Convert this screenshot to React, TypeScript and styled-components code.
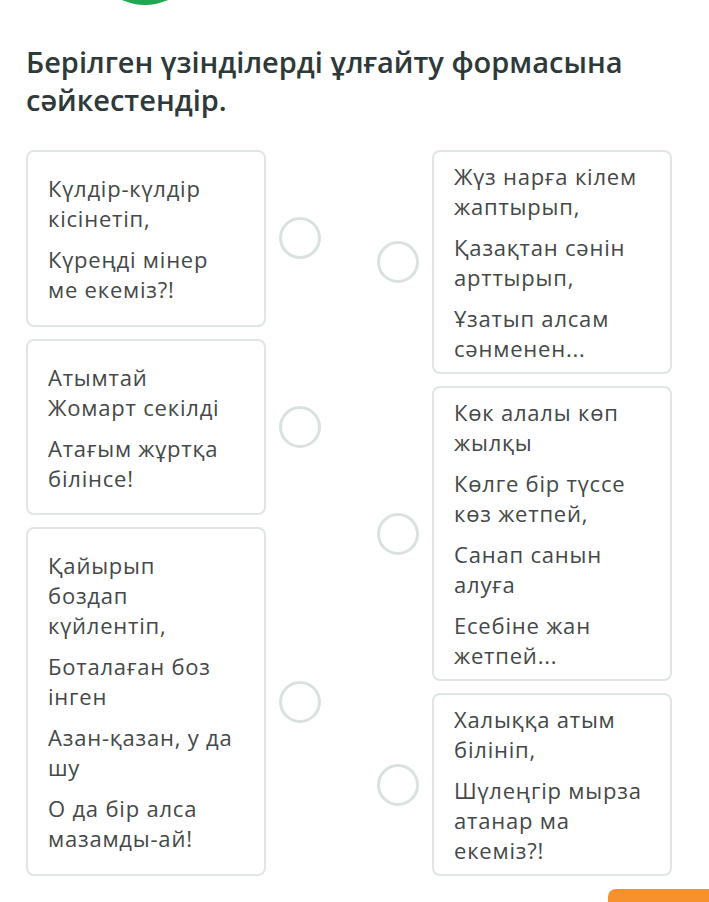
import styled, { createGlobalStyle } from "styled-components";

const GlobalStyle = createGlobalStyle`
  html, body {
    margin: 0;
    padding: 0;
    background: #ffffff;
    overflow: hidden;
  }
  body {
    font-family: "Open Sans", "Noto Sans", sans-serif;
  }
`;

type Card = { lines: string[] };

const leftCards: Card[] = [
  { lines: ["Күлдір-күлдір кісінетіп,", "Күреңді мінер ме екеміз?!"] },
  { lines: ["Атымтай Жомарт секілді", "Атағым жұртқа білінсе!"] },
  {
    lines: [
      "Қайырып боздап күйлентіп,",
      "Боталаған боз інген",
      "Азан-қазан, у да шу",
      "О да бір алса мазамды-ай!",
    ],
  },
];

const rightCards: Card[] = [
  { lines: ["Жүз нарға кілем жаптырып,", "Қазақтан сәнін арттырып,", "Ұзатып алсам сәнменен..."] },
  {
    lines: [
      "Көк алалы көп жылқы",
      "Көлге бір түссе көз жетпей,",
      "Санап санын алуға",
      "Есебіне жан жетпей...",
    ],
  },
  { lines: ["Халыққа атым білініп,", "Шүлеңгір мырза атанар ма екеміз?!"] },
];

const Page = styled.div`
  width: 709px;
  height: 902px;
  padding: 0 37px 0 26px;
  box-sizing: border-box;
  overflow: hidden;
`;

const Header = styled.div`
  display: flex;
  padding-left: 64px;
`;

const Progress = styled.div`
  width: 110px;
  height: 110px;
  margin-top: -105px;
  border-radius: 50%;
  background: #1fa84f;
`;

const Title = styled.h1`
  margin: 38px 0 31px;
  font-family: "Open Sans", "Noto Sans", sans-serif;
  font-size: 29px;
  line-height: 38px;
  font-weight: 600;
  color: #2e3939;
`;

const Board = styled.div`
  display: grid;
  grid-template-columns: 295px 295px;
  column-gap: 56px;
  align-items: stretch;
`;

const Column = styled.div`
  display: flex;
  flex-direction: column;
  gap: 12px;
`;

const Row = styled.div<{ $side: "left" | "right" }>`
  flex: 1 1 auto;
  display: flex;
  flex-direction: ${(p) => (p.$side === "left" ? "row" : "row-reverse")};
  align-items: stretch;
  gap: 13px;
`;

const CardBox = styled.div`
  width: 240px;
  box-sizing: border-box;
  border: 2px solid #e0e6e5;
  border-radius: 8px;
  background: #ffffff;
  padding: 9px 24px 9px 20px;
  display: flex;
  flex-direction: column;
  justify-content: center;
  gap: 11px;
`;

const Line = styled.p`
  margin: 0;
  font-size: 22px;
  line-height: 30px;
  letter-spacing: 0.8px;
  color: #444848;
`;

const Dot = styled.div`
  align-self: center;
  width: 42px;
  height: 42px;
  box-sizing: border-box;
  border-radius: 50%;
  border: 3px solid #dae1e1;
  background: #ffffff;
  flex-shrink: 0;
`;

const Footer = styled.div`
  display: flex;
  justify-content: flex-end;
  margin: 13px -100px 0 0;
`;

const NextButton = styled.div`
  width: 164px;
  height: 50px;
  border-radius: 8px;
  background: #f5922b;
`;

const MatchCard = ({ card, side }: { card: Card; side: "left" | "right" }) => (
  <Row $side={side}>
    <CardBox>
      {card.lines.map((l) => (
        <Line key={l}>{l}</Line>
      ))}
    </CardBox>
    <Dot />
  </Row>
);

export default function App() {
  return (
    <>
      <GlobalStyle />
      <Page>
        <Header>
          <Progress />
        </Header>
        <Title>Берілген үзінділерді ұлғайту формасына сәйкестендір.</Title>
        <Board>
          <Column>
            {leftCards.map((c, i) => (
              <MatchCard key={i} card={c} side="left" />
            ))}
          </Column>
          <Column>
            {rightCards.map((c, i) => (
              <MatchCard key={i} card={c} side="right" />
            ))}
          </Column>
        </Board>
        <Footer>
          <NextButton />
        </Footer>
      </Page>
    </>
  );
}
